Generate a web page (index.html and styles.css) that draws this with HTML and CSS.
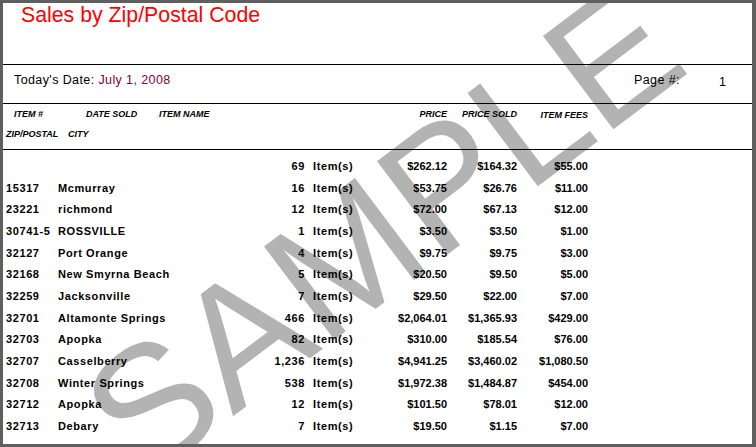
FILE: index.html
```html
<!DOCTYPE html>
<html>
<head>
<meta charset="utf-8">
<title>Sales by Zip/Postal Code</title>
<link rel="stylesheet" href="styles.css">
</head>
<body>
<div class="page">
  <div class="wm">SAMPLE</div>
  <header class="title-band"><h1 class="title">Sales by Zip/Postal Code</h1></header>
  <div class="date-band">
    <span class="date-label">Today's Date: <span class="date-val">July 1, 2008</span></span>
    <span class="page-label">Page #:</span>
    <span class="page-num">1</span>
  </div>
  <div class="col-head">
    <div class="head-row1">
      <span>ITEM #</span>
      <span>DATE SOLD</span>
      <span>ITEM NAME</span>
      <span class="r">PRICE</span>
      <span class="r">PRICE SOLD</span>
      <span class="r fees">ITEM FEES</span>
    </div>
    <div class="head-row2">
      <span class="zip-h">ZIP/POSTAL</span>
      <span>CITY</span>
    </div>
  </div>
  <div class="rows">
    <div class="row"><span class="t"></span><span class="t"></span><span class="t r">69</span><span class="t it">Item(s)</span><span class="r">$262.12</span><span class="r">$164.32</span><span class="r">$55.00</span></div>
    <div class="row"><span class="t">15317</span><span class="t">Mcmurray</span><span class="t r">16</span><span class="t it">Item(s)</span><span class="r">$53.75</span><span class="r">$26.76</span><span class="r">$11.00</span></div>
    <div class="row"><span class="t">23221</span><span class="t">richmond</span><span class="t r">12</span><span class="t it">Item(s)</span><span class="r">$72.00</span><span class="r">$67.13</span><span class="r">$12.00</span></div>
    <div class="row"><span class="t">30741-5</span><span class="t">ROSSVILLE</span><span class="t r">1</span><span class="t it">Item(s)</span><span class="r">$3.50</span><span class="r">$3.50</span><span class="r">$1.00</span></div>
    <div class="row"><span class="t">32127</span><span class="t">Port Orange</span><span class="t r">4</span><span class="t it">Item(s)</span><span class="r">$9.75</span><span class="r">$9.75</span><span class="r">$3.00</span></div>
    <div class="row"><span class="t">32168</span><span class="t">New Smyrna Beach</span><span class="t r">5</span><span class="t it">Item(s)</span><span class="r">$20.50</span><span class="r">$9.50</span><span class="r">$5.00</span></div>
    <div class="row"><span class="t">32259</span><span class="t">Jacksonville</span><span class="t r">7</span><span class="t it">Item(s)</span><span class="r">$29.50</span><span class="r">$22.00</span><span class="r">$7.00</span></div>
    <div class="row"><span class="t">32701</span><span class="t">Altamonte Springs</span><span class="t r">466</span><span class="t it">Item(s)</span><span class="r">$2,064.01</span><span class="r">$1,365.93</span><span class="r">$429.00</span></div>
    <div class="row"><span class="t">32703</span><span class="t">Apopka</span><span class="t r">82</span><span class="t it">Item(s)</span><span class="r">$310.00</span><span class="r">$185.54</span><span class="r">$76.00</span></div>
    <div class="row"><span class="t">32707</span><span class="t">Casselberry</span><span class="t r">1,236</span><span class="t it">Item(s)</span><span class="r">$4,941.25</span><span class="r">$3,460.02</span><span class="r">$1,080.50</span></div>
    <div class="row"><span class="t">32708</span><span class="t">Winter Springs</span><span class="t r">538</span><span class="t it">Item(s)</span><span class="r">$1,972.38</span><span class="r">$1,484.87</span><span class="r">$454.00</span></div>
    <div class="row"><span class="t">32712</span><span class="t">Apopka</span><span class="t r">12</span><span class="t it">Item(s)</span><span class="r">$101.50</span><span class="r">$78.01</span><span class="r">$12.00</span></div>
    <div class="row"><span class="t">32713</span><span class="t">Debary</span><span class="t r">7</span><span class="t it">Item(s)</span><span class="r">$19.50</span><span class="r">$1.15</span><span class="r">$7.00</span></div>
    <div class="row"><span class="t">32714</span><span class="t">Altamonte Springs</span><span class="t r">306</span><span class="t it">Item(s)</span><span class="r">$790.20</span><span class="r">$592.10</span><span class="r">$147.00</span></div>
  </div>
</div>
</body>
</html>
```
FILE: styles.css
```css
* { box-sizing: border-box; }
html, body { margin: 0; padding: 0; }
body {
  background: #5f5f5f;
  font-family: "Liberation Sans", Arial, sans-serif;
  color: #000;
}
.page {
  margin: 3px 4px 0 3px;
  height: 441px;
  background: #fff;
  position: relative;
  overflow: hidden;
}
.wm {
  position: absolute;
  left: 379px;
  top: 227px;
  transform: translate(-50%, -50%) rotate(-37deg);
  font-size: 170px;
  line-height: 1;
  color: #b3b3b3;
  white-space: nowrap;
  z-index: 0;
}
.title-band, .date-band, .col-head, .rows {
  position: relative;
  z-index: 1;
}
.title-band {
  height: 62px;
  border-bottom: 1px solid #000;
  padding: 2px 0 0 18px;
}
.title {
  margin: 0;
  font-size: 21.3px;
  font-weight: normal;
  line-height: 1;
  color: #f00;
}
.date-band {
  height: 39px;
  border-bottom: 1px solid #000;
  padding: 9px 0 0 11px;
  display: flex;
  font-size: 12.5px;
  line-height: 1;
  letter-spacing: 0.4px;
}
.date-label { flex: 0 0 620px; }
.date-val { color: #80003a; }
.page-label { flex: 0 0 85px; }
.page-num { padding-top: 2px; }
.col-head {
  height: 46px;
  border-bottom: 1px solid #000;
  padding-top: 6px;
  font-size: 9px;
  font-weight: bold;
  font-style: italic;
  line-height: 9px;
}
.head-row1 {
  display: grid;
  grid-template-columns: 72px 73px 214px 74px 70px 71px;
  padding-left: 11px;
}
.head-row1 .fees { padding-top: 1px; }
.head-row2 {
  display: flex;
  margin-top: 10px;
  padding-left: 3px;
}
.zip-h { flex: 0 0 62px; }
.r { text-align: right; }
.rows {
  padding-top: 6px;
}
.row {
  display: grid;
  grid-template-columns: 52px 195px 52px 68px 74px 70px 71px;
  padding-left: 3px;
  height: 21.667px;
  line-height: 21.667px;
  font-size: 11px;
  font-weight: bold;
  white-space: nowrap;
}
.row .t { letter-spacing: 0.6px; }
.row .it { padding-left: 8px; }
```
